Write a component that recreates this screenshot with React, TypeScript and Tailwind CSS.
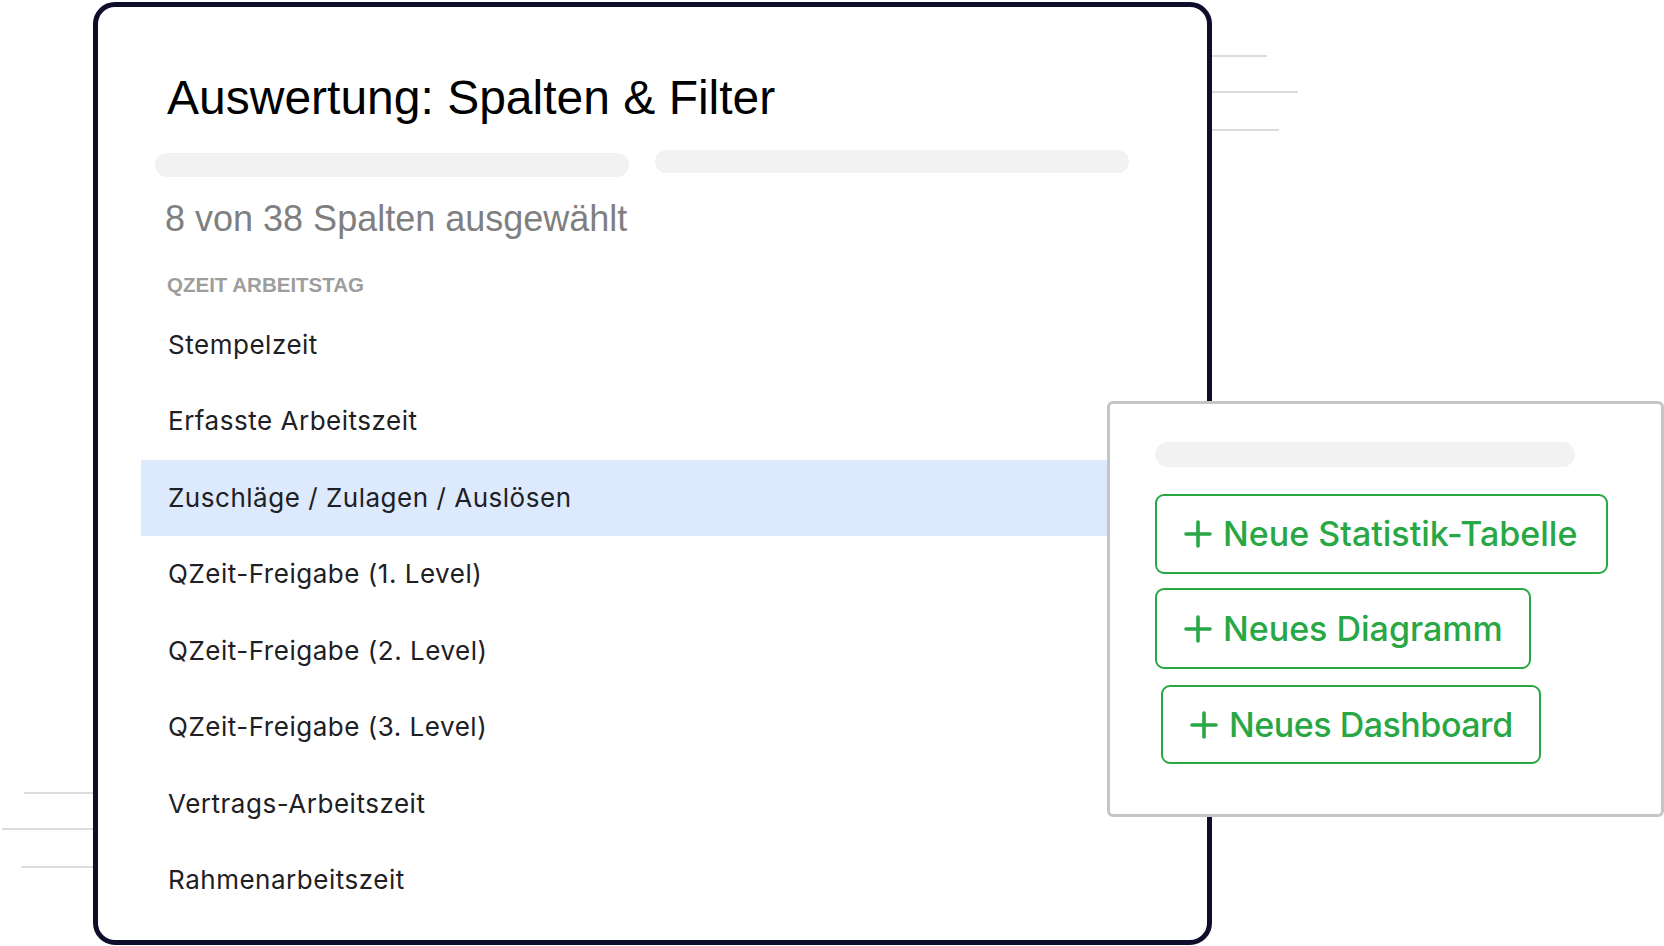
import React from "react";

const columns = [
  "Stempelzeit",
  "Erfasste Arbeitszeit",
  "Zuschläge / Zulagen / Auslösen",
  "QZeit-Freigabe (1. Level)",
  "QZeit-Freigabe (2. Level)",
  "QZeit-Freigabe (3. Level)",
  "Vertrags-Arbeitszeit",
  "Rahmenarbeitszeit",
];

const PlusIcon = () => (
  <svg width="28" height="28" viewBox="0 0 28 28" className="shrink-0">
    <path
      d="M14 2v24M2 14h24"
      stroke="#28a745"
      strokeWidth="3.6"
      strokeLinecap="round"
      fill="none"
    />
  </svg>
);

const CreateButton = ({
  label,
  className,
}: {
  label: string;
  className?: string;
}) => (
  <button
    className={`flex items-center gap-[11px] pl-[27px] border-[2.5px] border-[#28a745] rounded-[9px] bg-white text-[#28a745] text-[34px] font-medium leading-none ${className}`}
    style={{ fontFamily: "Inter, 'Noto Sans', sans-serif" }}
  >
    <PlusIcon />
    <span>{label}</span>
  </button>
);

export default function App() {
  return (
    <div className="relative w-[1664px] h-[946px] bg-white overflow-hidden">
      {/* decorative lines behind the card */}
      <div className="absolute left-[1212px] top-[55px] w-[55px] h-[2px] bg-[#dcdcdc]" />
      <div className="absolute left-[1212px] top-[91px] w-[86px] h-[2px] bg-[#dcdcdc]" />
      <div className="absolute left-[1212px] top-[129px] w-[67px] h-[2px] bg-[#dcdcdc]" />
      <div className="absolute left-[24px] top-[792px] w-[72px] h-[2px] bg-[#dcdcdc]" />
      <div className="absolute left-[2px] top-[828px] w-[94px] h-[2px] bg-[#dcdcdc]" />
      <div className="absolute left-[21px] top-[866px] w-[75px] h-[2px] bg-[#dcdcdc]" />

      <div className="pl-[93px] pt-[2px]">
        <div
          className="relative w-[1119px] h-[943px] border-[5px] border-[#0e0d2c] rounded-[22px] bg-white flex flex-col"
          style={{ fontFamily: "'Liberation Sans', Arial, sans-serif" }}
        >
          <h1 className="mt-[67px] ml-[69px] text-[48px] leading-none text-black font-normal">
            Auswertung: Spalten &amp; Filter
          </h1>

          <div className="mt-[28px] ml-[57px] flex items-start gap-[26px]">
            <div className="mt-[3px] w-[474px] h-[24px] rounded-full bg-[#f2f2f2]" />
            <div className="w-[474px] h-[23px] rounded-full bg-[#f2f2f2]" />
          </div>

          <p className="mt-[24px] ml-[67px] text-[36px] leading-none text-[#7f7f7f]">
            8 von 38 Spalten ausgewählt
          </p>

          <p className="mt-[38px] ml-[69px] text-[20.5px] leading-none font-bold text-[#9d9d9d]">
            QZEIT ARBEITSTAG
          </p>

          <ul
            className="mt-[11px] mx-[43px] flex flex-col"
            style={{ fontFamily: "Inter, 'Noto Sans', sans-serif" }}
          >
            {columns.map((c, i) => (
              <li
                key={c}
                className={`h-[76.5px] flex items-center pl-[27px] text-[26px] leading-none tracking-[0.02em] text-[#1e2024] ${
                  i === 2 ? "bg-[#dde9fc]" : ""
                }`}
              >
                {c}
              </li>
            ))}
          </ul>
        </div>
      </div>

      {/* overlay menu */}
      <div className="absolute left-[1107px] top-[401px] w-[557px] h-[416px] border-[3px] border-[#c5c5c5] rounded-[6px] bg-white pl-[45px] pt-[38px] flex flex-col items-start">
        <div className="w-[420px] h-[25px] rounded-full bg-[#f2f2f2]" />
        <CreateButton label="Neue Statistik-Tabelle" className="mt-[27px] w-[453px] h-[80px]" />
        <CreateButton label="Neues Diagramm" className="mt-[14px] w-[376px] h-[81px]" />
        <CreateButton
          label="Neues Dashboard"
          className="mt-[16px] ml-[6px] w-[380px] h-[79px] tracking-[-0.014em]"
        />
      </div>
    </div>
  );
}
